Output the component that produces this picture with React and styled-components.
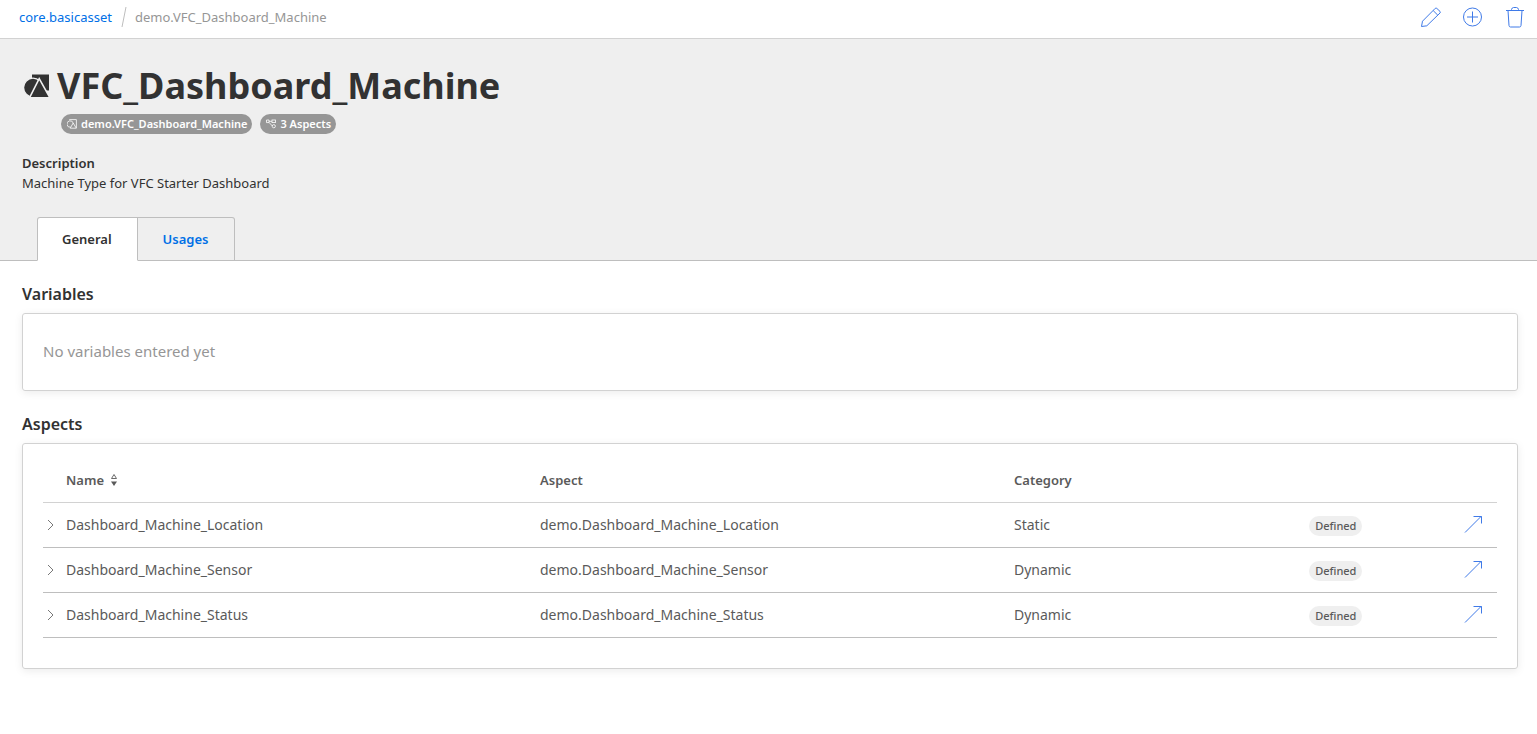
import React from "react";
import styled, { createGlobalStyle } from "styled-components";

const GlobalStyle = createGlobalStyle`
  *, *::before, *::after { box-sizing: border-box; }
  body {
    margin: 0;
    background: #fff;
    color: #323232;
    font-family: "Noto Sans", "Open Sans", sans-serif;
    font-size: 13px;
    line-height: 20px;
  }
  button { font: inherit; }
`;

const TopBar = styled.header`
  display: flex;
  align-items: center;
  justify-content: space-between;
  height: 39px;
  padding: 0 12px 4px 19px;
  border-bottom: 1px solid #d2d2d2;
`;

const Breadcrumb = styled.nav`
  display: flex;
  align-items: center;
  color: #969696;
  svg { margin: 0 8px 0 9px; }
`;

const CrumbLink = styled.a`
  color: #006fe6;
  text-decoration: none;
`;

const Actions = styled.div`
  display: flex;
  gap: 22px;
`;

const IconButton = styled.button`
  display: flex;
  padding: 0;
  border: 0;
  background: none;
  color: ${(p) => (p.$muted ? "#787878" : "#3f7ae8")};
  cursor: pointer;
`;

const Hero = styled.section`
  padding: 24px 22px 0;
  background: #efefef;
  border-bottom: 1px solid #bebebe;
`;

const TitleRow = styled.div`
  display: flex;
  align-items: center;
  gap: 8px;
  height: 46px;
  padding-left: 2px;
`;

const Title = styled.h1`
  margin: 0;
  font-size: 36px;
  line-height: 46px;
  font-weight: 700;
`;

const Tags = styled.div`
  display: flex;
  gap: 8px;
  margin-top: 5px;
  padding-left: 39px;
`;

const Tag = styled.span`
  display: inline-flex;
  align-items: center;
  gap: 3px;
  height: 20px;
  padding: 0 5px 0 6px;
  border-radius: 10px;
  background: #969696;
  color: #fff;
  font-size: 11px;
  font-weight: 600;
`;

const Description = styled.dl`
  margin: 19px 0 24px;
  dt { font-weight: 600; }
  dd { margin: 0; }
`;

const Tabs = styled.div`
  display: flex;
  margin-bottom: -1px;
  padding-left: 15px;
`;

const Tab = styled.button`
  height: 44px;
  padding: 0 25px 0 24px;
  border: 1px solid #bebebe;
  border-bottom-color: ${(p) => (p.$active ? "#fff" : "#bebebe")};
  border-radius: ${(p) => (p.$active ? "3px 0 0 0" : "0 3px 0 0")};
  background: ${(p) => (p.$active ? "#fff" : "#efefef")};
  color: ${(p) => (p.$active ? "#323232" : "#006fe6")};
  font-weight: 600;
  cursor: pointer;
  & + & { padding-left: 25px; border-left-width: 0; }
`;

const Content = styled.main`
  padding: 23px 19px 24px 22px;
`;

const SectionTitle = styled.h2`
  margin: 0 0 9px;
  font-size: 16px;
  line-height: 20px;
  font-weight: 600;
`;

const Card = styled.section`
  margin-bottom: 23px;
  padding: ${(p) => (p.$table ? "15px 20px 30px" : "25px 20px 27px")};
  border: 1px solid #d2d2d2;
  border-radius: 3px;
  box-shadow: 0 2px 8px rgba(0, 0, 0, 0.08);
`;

const EmptyText = styled.p`
  margin: 0;
  color: #969696;
  font-size: 15px;
  line-height: 24px;
`;

const AspectTable = styled.table`
  width: 100%;
  table-layout: fixed;
  border-collapse: separate;
  border-spacing: 0;
  color: #5a5a5a;
`;

const Col = styled.col`
  width: ${(p) => p.$width};
`;

const HeadCell = styled.th`
  height: 44px;
  padding: 0 0 2px;
  border-bottom: 1px solid #d2d2d2;
  text-align: left;
  font-weight: 600;
`;

const SortButton = styled.button`
  display: flex;
  align-items: center;
  gap: 6px;
  padding: 0;
  border: 0;
  background: none;
  color: inherit;
  cursor: pointer;
`;

const Cell = styled.td`
  height: 45px;
  padding: ${(p) => (p.$badge ? "2px 0 0" : p.$link ? "0 0 2px" : "0")};
  border-bottom: 1px solid #bebebe;
  font-size: 14px;
`;

const Badge = styled.span`
  display: block;
  width: fit-content;
  padding: 0 6px;
  border-radius: 10px;
  background: #efefef;
  font-size: 11px;
  font-weight: 500;
`;

const OpenLink = styled.a`
  display: flex;
  width: fit-content;
  color: #3f7ae8;
`;

const TypeGlyph = () => (
  <svg width="25" height="24" viewBox="0 0 25 24" fill="#323232" stroke="#efefef" strokeWidth="1.2" aria-hidden="true">
    <path d="M8 0.5H25V16.5H8Z" stroke="none" />
    <circle cx="9" cy="13.6" r="9.4" />
    <path d="M15.2 4.6L26 24H5.4Z" strokeWidth="1.6" />
    <path d="M5 23H25V24H5Z" fill="#efefef" stroke="none" />
  </svg>
);

const Slash = () => (
  <svg width="6" height="22" viewBox="0 0 6 22" aria-hidden="true">
    <path d="M5 1L1 21" stroke="#bebebe" fill="none" />
  </svg>
);

const TypeTagIcon = () => (
  <svg width="11" height="10" viewBox="0 0 11 10" fill="none" stroke="#fff" strokeWidth="0.8" aria-hidden="true">
    <path d="M2.5 1.2V0.6H9.4V9.2H3.2L6.2 4L9 8.8M3.6 8.2A3.2 3.2 0 1 1 6.2 4" />
  </svg>
);

const AspectTagIcon = () => (
  <svg width="11" height="10" viewBox="0 0 11 10" fill="none" stroke="#fff" strokeWidth="0.8" aria-hidden="true">
    <path d="M0.5 1H3V3.6H0.5ZM3 2.3H6M3 3.4L6.4 7" />
    <rect x="6" y="1" width="3.5" height="2.6" />
    <circle cx="7.8" cy="7.2" r="1.6" />
  </svg>
);

const Pencil = () => (
  <svg width="21" height="22" viewBox="0 0 21 22" fill="none" stroke="currentColor" aria-hidden="true">
    <path d="M1.5 20.5L2.5 15.2L15.2 2.4Q16 1.6 16.8 2.4L20 5.4Q20.8 6.2 20 7L6.8 19.8L1.5 20.5ZM13.2 4.6L17.8 9.2" />
  </svg>
);

const PlusCircle = () => (
  <svg width="20" height="22" viewBox="0 0 20 22" fill="none" stroke="currentColor" aria-hidden="true">
    <circle cx="9.5" cy="11" r="9" />
    <path d="M9.5 5.5V16.5M4 11H15" />
  </svg>
);

const Trash = () => (
  <svg width="20" height="22" viewBox="0 0 20 22" fill="none" stroke="currentColor" aria-hidden="true">
    <path d="M1 4.5H19M3 4.5L4 19.5Q4.2 21 5.5 21H14.5Q15.8 21 16 19.5L17 4.5M6.5 4.5V3.5Q7 1.5 8.5 1.5H11.5Q13 1.5 13.5 3.5V4.5" />
  </svg>
);

const Chevron = () => (
  <svg width="15" height="12" viewBox="0 0 15 12" fill="none" stroke="currentColor" aria-hidden="true">
    <path d="M5 1L10 6L5 11" />
  </svg>
);

const SortIcon = () => (
  <svg width="8" height="14" viewBox="0 0 8 14" aria-hidden="true">
    <path d="M1.5 5.5H6.5L4 1.5Z" fill="none" stroke="#5a5a5a" strokeWidth="0.9" />
    <path d="M1 8.5H7L4 13Z" fill="#5a5a5a" />
  </svg>
);

const Arrow = () => (
  <svg width="20" height="20" viewBox="0 0 20 20" fill="none" stroke="currentColor" aria-hidden="true">
    <path d="M2 18.5L18.5 2M10.5 2.5H18.5V9.5" />
  </svg>
);

const aspects = [
  { name: "Dashboard_Machine_Location", category: "Static" },
  { name: "Dashboard_Machine_Sensor", category: "Dynamic" },
  { name: "Dashboard_Machine_Status", category: "Dynamic" },
];

export default function App() {
  return (
    <>
      <GlobalStyle />
      <TopBar>
        <Breadcrumb aria-label="Breadcrumb">
          <CrumbLink href="#basicasset">core.basicasset</CrumbLink>
          <Slash />
          <span>demo.VFC_Dashboard_Machine</span>
        </Breadcrumb>
        <Actions>
          <IconButton aria-label="Edit"><Pencil /></IconButton>
          <IconButton aria-label="Add"><PlusCircle /></IconButton>
          <IconButton aria-label="Delete"><Trash /></IconButton>
        </Actions>
      </TopBar>
      <Hero>
        <TitleRow>
          <TypeGlyph />
          <Title>VFC_Dashboard_Machine</Title>
        </TitleRow>
        <Tags>
          <Tag><TypeTagIcon />demo.VFC_Dashboard_Machine</Tag>
          <Tag><AspectTagIcon />3 Aspects</Tag>
        </Tags>
        <Description>
          <dt>Description</dt>
          <dd>Machine Type for VFC Starter Dashboard</dd>
        </Description>
        <Tabs role="tablist">
          <Tab role="tab" aria-selected="true" $active>General</Tab>
          <Tab role="tab" aria-selected="false">Usages</Tab>
        </Tabs>
      </Hero>
      <Content>
        <SectionTitle>Variables</SectionTitle>
        <Card>
          <EmptyText>No variables entered yet</EmptyText>
        </Card>
        <SectionTitle>Aspects</SectionTitle>
        <Card $table>
          <AspectTable>
            <colgroup>
              <Col $width="23px" />
              <Col $width="32.6%" />
              <Col $width="32.6%" />
              <Col $width="20.3%" />
              <Col $width="10.6%" />
              <Col />
            </colgroup>
            <thead>
              <tr>
                <HeadCell />
                <HeadCell><SortButton>Name<SortIcon /></SortButton></HeadCell>
                <HeadCell>Aspect</HeadCell>
                <HeadCell>Category</HeadCell>
                <HeadCell />
                <HeadCell />
              </tr>
            </thead>
            <tbody>
              {aspects.map((a) => (
                <tr key={a.name}>
                  <Cell><IconButton $muted aria-label={`Expand ${a.name}`}><Chevron /></IconButton></Cell>
                  <Cell>{a.name}</Cell>
                  <Cell>demo.{a.name}</Cell>
                  <Cell>{a.category}</Cell>
                  <Cell $badge><Badge>Defined</Badge></Cell>
                  <Cell $link><OpenLink href={`#${a.name}`} aria-label={`Open ${a.name}`}><Arrow /></OpenLink></Cell>
                </tr>
              ))}
            </tbody>
          </AspectTable>
        </Card>
      </Content>
    </>
  );
}
